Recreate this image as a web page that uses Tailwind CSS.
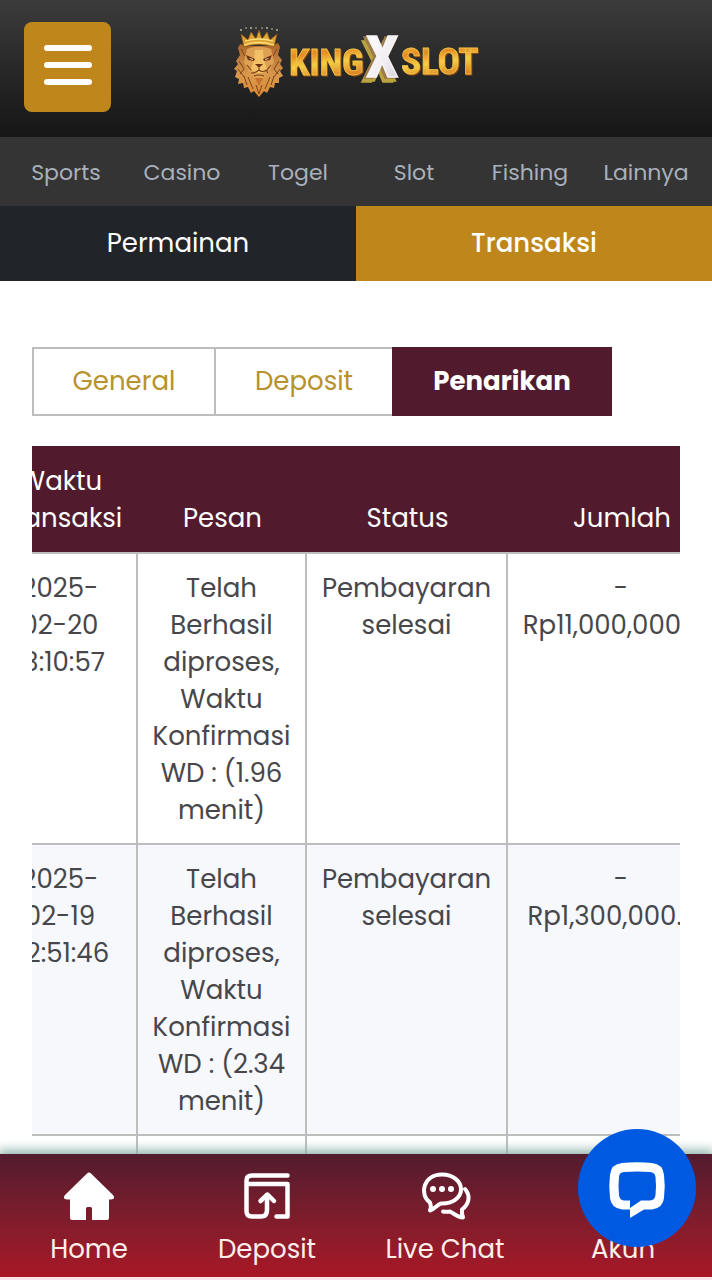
<!DOCTYPE html>
<html lang="id">

<head>
    <meta charset="UTF-8">
    <meta name="viewport" content="width=device-width, initial-scale=1.0">
    <title>KINGXSLOT</title>
    <script src="https://cdn.jsdelivr.net/npm/@tailwindcss/browser@4"></script>
</head>

<body class="h-dvh flex flex-col overflow-hidden bg-white font-[Poppins,Inter,sans-serif] text-[26px] leading-[37px] text-[#47474b]">
    <!-- Header -->
    <header class="shrink-0 grid grid-cols-[1fr_auto_1fr] items-start bg-linear-to-b from-[#3b3b3b] to-[#161616] px-6 pt-[22px] h-[137px]">
        <button type="button" aria-label="Menu" class="w-[87px] h-[90px] rounded-lg bg-[#be861b] flex flex-col items-center justify-center gap-[11px] pb-1">
            <span class="w-12 h-[6px] rounded-full bg-white"></span>
            <span class="w-12 h-[6px] rounded-full bg-white"></span>
            <span class="w-12 h-[6px] rounded-full bg-white"></span>
        </button>
        <a href="#" aria-label="KINGXSLOT" class="block">
            <svg class="w-[250px] h-[80px]" viewBox="0 0 250 80">
                <defs>
                    <linearGradient id="gold" x1="0" y1="0" x2=".25" y2="1" spreadMethod="reflect">
                        <stop offset="0" stop-color="#f6d44c" />
                        <stop offset=".35" stop-color="#e58a26" />
                        <stop offset=".6" stop-color="#f4cf45" />
                        <stop offset="1" stop-color="#d9701c" />
                    </linearGradient>
                    <linearGradient id="mane" x1="0" y1="0" x2="0" y2="1">
                        <stop offset="0" stop-color="#a9662c" />
                        <stop offset=".6" stop-color="#d9984c" />
                        <stop offset="1" stop-color="#dc8a34" />
                    </linearGradient>
                    <linearGradient id="silver" x1="0" y1="0" x2="1" y2="1">
                        <stop offset="0" stop-color="#ffffff" />
                        <stop offset=".6" stop-color="#f0edf2" />
                        <stop offset="1" stop-color="#cbc3ca" />
                    </linearGradient>
                </defs>
                <!-- lion mane -->
                <path fill="url(#mane)" d="M9 22 7 26 9 33 5 39 7 42 3 47 6 49 4 55 8 57 7 62 12 61 13 66 17 65 20 71 23 69 28 75 33 69 36 71 39 65 43 66 44 61 48 61 48 56 52 54 49 49 52 46 49 42 51 38 47 33 49 25 47 21 40 24H16Z" />
                <path fill="none" stroke="#7d431b" stroke-width="1" d="M8 39 13 47 9 52M7 47l6 8M13 54l3 9M17 55l5 12M48 39l-5 8 4 5M49 47l-6 8M43 54l-3 9M39 55l-5 12M25 63l3 9 3-9M10 27l4 7M46 27l-4 7" />
                <!-- face -->
                <path fill="#dea052" d="M16 27Q28 22 40 27L43 40 38 50 33 56H23L18 50 13 40Z" />
                <path fill="#f2c067" d="M24 28h8l1 10 3 9-5 4h-6l-5-4 3-9Z" />
                <path fill="#6b3315" d="M15 33l9 4-1 2-6-1ZM41 33l-9 4 1 2 6-1ZM24 42h8l-4 4Z" />
                <path fill="#f6dda0" d="M18 36l4 1v1l-3-1ZM38 36l-4 1v1l3-1Z" />
                <path fill="none" stroke="#7d431b" stroke-width="1.1" d="M28 46v3M20 51q5 0 8-3 3 3 8 0 0 3 1 3M23 54q5-2 10 0M16 43l4 5M40 43l-4 5" />
                <path fill="#c8722f" d="M24 56h8l-4 8Z" />
                <!-- crown -->
                <path fill="#e0a433" stroke="#8a5414" stroke-width=".7" d="M13 25 10 12l7 6 3-8 5 7 3-9 3 9 5-7 3 8 7-6-3 13Q28 20 13 25Z" />
                <path fill="none" stroke="#fae184" stroke-width="1.3" d="M13 23Q28 18 43 23M14 19Q28 15 42 19" />
                <g fill="#cfc8a5">
                    <circle cx="10" cy="8" r=".9" />
                    <circle cx="15" cy="6" r=".8" />
                    <circle cx="20" cy="6" r=".9" />
                    <circle cx="25" cy="6" r=".8" />
                    <circle cx="31" cy="6" r=".8" />
                    <circle cx="36" cy="6" r=".9" />
                    <circle cx="41" cy="7" r=".8" />
                    <circle cx="46" cy="8" r=".9" />
                </g>
                <g font-family="'Liberation Sans Narrow', 'Roboto Condensed', Roboto, sans-serif" font-weight="700">
                    <text class="drop-shadow-[1px_1px_0_#8f4a12]" x="58" y="53" font-size="37" fill="url(#gold)" stroke="#f0c343" stroke-width=".8">KING</text>
                    <text class="drop-shadow-[1px_1px_0_#8f4a12]" x="170" y="52" font-size="37" fill="url(#gold)" stroke="#f0c343" stroke-width=".8">SLOT</text>
                    <text class="[filter:drop-shadow(-3px_1px_0_#9c7b49)_drop-shadow(-2px_4px_0_#b9a33f)]" x="135" y="55" font-size="58" fill="url(#silver)" stroke="#f7f3f5" stroke-width="1.500">X</text>
                </g>
            </svg>
        </a>
    </header>

    <!-- Category menu -->
    <nav class="shrink-0 grid grid-cols-6 px-2 h-[69px] pt-px items-center bg-[#343434] text-center text-[22px] text-[#a9b0bb]">
        <a href="#">Sports</a>
        <a href="#">Casino</a>
        <a href="#">Togel</a>
        <a href="#">Slot</a>
        <a href="#">Fishing</a>
        <a href="#">Lainnya</a>
    </nav>

    <div class="shrink-0 grid grid-cols-2 h-[75px] text-white">
        <button type="button" class="bg-[#212529]">Permainan</button>
        <button type="button" class="bg-[#be861b] font-medium">Transaksi</button>
    </div>

    <!-- Transactions -->
    <main class="flex-1 min-h-0 overflow-hidden px-8 pt-[66px]">
        <div class="flex h-[69px] mb-[30px]">
            <button type="button" class="w-[184px] border-2 border-[#bdbdbd] text-[#b8922b]">General</button>
            <button type="button" class="w-[176px] border-y-2 border-[#bdbdbd] text-[#b8922b]">Deposit</button>
            <button type="button" class="w-[220px] bg-[#521b2d] font-bold text-white">Penarikan</button>
        </div>

        <!-- table is wider than the screen, shown shifted to the last columns -->
        <div class="overflow-hidden">
            <table class="-ml-12 table-fixed w-[752px] border-separate border-spacing-0 text-center">
                <colgroup>
                    <col class="w-[154px]">
                    <col class="w-[169px]">
                    <col class="w-[201px]">
                    <col class="w-[228px]">
                </colgroup>
                <thead class="bg-[#521b2d] text-white align-bottom">
                    <tr class="*:font-normal *:px-3 *:pt-[17px] *:pb-[15px] *:border-b-2 *:border-[#bdbdbd]">
                        <th>Waktu Transaksi</th>
                        <th>Pesan</th>
                        <th>Status</th>
                        <th>Jumlah</th>
                    </tr>
                </thead>
                <tbody class="align-top">
                    <tr class="*:px-3 *:pt-4 *:pb-[14px] *:border-r-2 *:border-b-2 *:border-[#bdbdbd]">
                        <td>2025-<br>02-20<br>13:10:57</td>
                        <td>Telah Berhasil diproses, Waktu Konfirmasi WD : (1.96 menit)</td>
                        <td>Pembayaran selesai</td>
                        <td class="whitespace-nowrap">-<br>Rp11,000,000.00</td>
                    </tr>
                    <tr class="bg-[#f6f8fc] *:px-3 *:pt-4 *:pb-[14px] *:border-r-2 *:border-b-2 *:border-[#bdbdbd]">
                        <td>2025-<br>02-19<br>22:51:46</td>
                        <td>Telah Berhasil diproses, Waktu Konfirmasi WD : (2.34 menit)</td>
                        <td>Pembayaran selesai</td>
                        <td class="whitespace-nowrap">-<br>Rp1,300,000.00</td>
                    </tr>
                    <tr class="*:h-20 *:border-r-2 *:border-[#bdbdbd]">
                        <td></td>
                        <td></td>
                        <td></td>
                        <td></td>
                    </tr>
                </tbody>
            </table>
        </div>
    </main>

    <!-- Bottom bar -->
    <footer class="relative shrink-0 bg-[#fbe3ea] pb-[3px] shadow-[0_-2px_10px_2px_#8fb5aa]">
        <nav class="grid grid-cols-4 h-[123px] pt-4 bg-linear-to-b from-[#521b2d] to-[#a91626] text-center leading-8 text-[#fdeee8] *:flex *:flex-col *:items-center *:gap-[9px]">
            <a href="#">
                <svg class="size-[54px]" viewBox="0 0 54 54" fill="#fff">
                    <path d="M25 3.500Q27 1.500 29 3.500L51 25Q54 29 49 29.500H47V48Q47 50 45 50H30V38.500Q30 37 28.500 37H25.500Q24 37 24 38.500V50H10Q8 50 8 48V29.500H5Q0 29 3 25Z" />
                </svg>
                Home
            </a>
            <a href="#">
                <svg class="size-[54px]" viewBox="0 0 54 54" fill="none" stroke="#fff" stroke-width="4.500" stroke-linecap="round" stroke-linejoin="round">
                    <path d="M47.500 5.500H12Q6.500 5.500 6.500 10.500V41Q6.500 46.500 12 46.500H21Q27 46.500 27 40V25" />
                    <path d="M20.500 31 27.500 24.500 34 31" />
                    <path d="M8 14H47.500V46.500H36.500" />
                </svg>
                Deposit
            </a>
            <a href="#">
                <svg class="size-[54px]" viewBox="0 0 54 54" fill="none" stroke="#fff" stroke-width="4" stroke-linejoin="round">
                    <path d="M12 32.500C1 25 5 4.500 24 4.500 35 4.500 43 11 43 19.500S34 34 23 33.500C20 34 17 39 12 40.500 13.500 37 13 35 12 32.500Z" />
                    <path d="M47 19C53 26 51 34 44 39.500 43.500 43 44 45 45 47.500 40 47.500 35 43 32 41.500 29 42 27 42 25 41.500" stroke-linecap="round" />
                    <g fill="#fff" stroke="none">
                        <circle cx="15" cy="19" r="3" />
                        <circle cx="24" cy="19" r="3" />
                        <circle cx="33" cy="19" r="3" />
                    </g>
                </svg>
                Live Chat
            </a>
            <a href="#">
                <svg class="size-[54px]" viewBox="0 0 54 54" fill="#fff">
                    <circle cx="27" cy="16" r="10" />
                    <path d="M8 48Q8 30 27 30T46 48Z" />
                </svg>
                Akun
            </a>
        </nav>
        <!-- Chat launcher -->
        <button type="button" aria-label="Chat" class="absolute right-4 bottom-[33px] size-[118px] rounded-full bg-[#0059e1]">
            <svg class="size-full" viewBox="0 0 118 118">
                <path fill="#fff" fill-rule="evenodd" d="M44 34Q59 32.500 74 34 85 35 86 46 87.500 57 86 69 85 79 74 80.500H66L52 89V80.500H44Q33 79 32 69 30.500 57 32 46 33 35 44 34ZM46 43Q41 43.500 41 48 40 57 41 66 41.500 71 46 71.500H52V79L63 71.500H72Q77 71 77.500 66 78.500 57 77.500 48 77 43.500 72 43 59 42 46 43Z" />
            </svg>
        </button>
    </footer>
</body>

</html>
